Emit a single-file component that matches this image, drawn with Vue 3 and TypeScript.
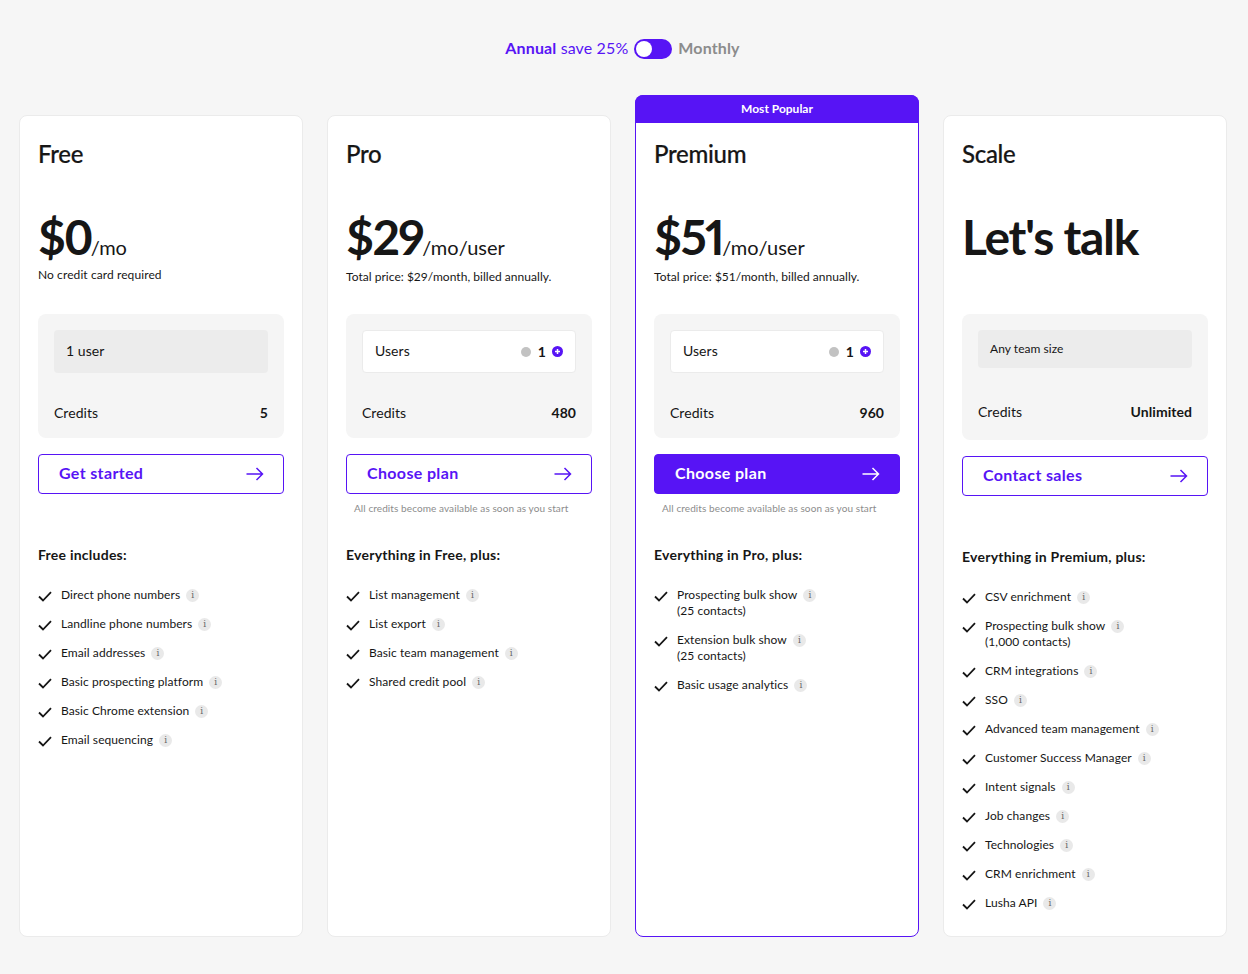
<template>
  <div class="page">
    <div class="billing-toggle">
      <span class="annual"><b>Annual</b> save 25%</span>
      <span class="switch"><span class="knob"></span></span>
      <b class="monthly">Monthly</b>
    </div>

    <div class="plans">
      <section
        v-for="plan in plans"
        :key="plan.name"
        class="plan"
        :class="{ popular: plan.popular, scale: plan.custom, free: plan.price === '$0' }"
      >
        <div v-if="plan.popular" class="banner">Most Popular</div>

        <div class="plan-head">
          <h2 class="plan-name">{{ plan.name }}</h2>
          <div class="price">
            {{ plan.price }}<span v-if="plan.unit" class="unit">{{ plan.unit }}</span>
          </div>
          <p v-if="plan.sub" class="sub">{{ plan.sub }}</p>
        </div>

        <div class="usage">
          <div v-if="plan.seats" class="seats">
            <span>Users</span>
            <span class="stepper">
              <i class="minus"></i>
              <b>1</b>
              <svg class="plus" width="11" height="11" viewBox="0 0 11 11">
                <circle cx="5.5" cy="5.5" r="5.5" fill="#5714f5" />
                <path d="M5.5 3v5M3 5.5h5" stroke="#fff" stroke-width="1.5" />
              </svg>
            </span>
          </div>
          <div v-else class="fixed-seats">{{ plan.teamLabel }}</div>
          <div class="credits">
            <span>Credits</span>
            <b>{{ plan.credits }}</b>
          </div>
        </div>

        <button class="cta" :class="{ solid: plan.popular }">
          <span class="cta-label">{{ plan.cta }}</span>
          <svg width="18" height="14" viewBox="0 0 18 14" fill="none" stroke="currentColor" stroke-width="1.5">
            <path d="M0.5 7H16.5M10.5 1L16.5 7L10.5 13" />
          </svg>
        </button>
        <p class="note">{{ plan.seats ? 'All credits become available as soon as you start' : '' }}</p>

        <h3 class="includes">{{ plan.includes }}</h3>
        <ul class="features">
          <li v-for="item in plan.features" :key="item.label">
            <svg class="check" width="14" height="11" viewBox="0 0 14 11" fill="none" stroke="#161616" stroke-width="1.8">
              <path d="M1 5.5L5 9.5L13 1.2" />
            </svg>
            <span class="feature-text">
              {{ item.label }}<span class="info">i</span>
              <template v-if="item.extra"><br />{{ item.extra }}</template>
            </span>
          </li>
        </ul>
      </section>
    </div>
  </div>
</template>

<script setup lang="ts">
interface Feature {
  label: string;
  extra?: string;
}

interface Plan {
  name: string;
  price: string;
  unit?: string;
  sub?: string;
  seats: boolean;
  teamLabel?: string;
  credits: string;
  cta: string;
  includes: string;
  popular?: boolean;
  custom?: boolean;
  features: Feature[];
}

const toFeatures = (labels: string[]): Feature[] => labels.map((label) => ({ label }));

const plans: Plan[] = [
  {
    name: 'Free',
    price: '$0',
    unit: '/mo',
    sub: 'No credit card required',
    seats: false,
    teamLabel: '1 user',
    credits: '5',
    cta: 'Get started',
    includes: 'Free includes:',
    features: toFeatures([
      'Direct phone numbers',
      'Landline phone numbers',
      'Email addresses',
      'Basic prospecting platform',
      'Basic Chrome extension',
      'Email sequencing',
    ]),
  },
  {
    name: 'Pro',
    price: '$29',
    unit: '/mo/user',
    sub: 'Total price: $29/month, billed annually.',
    seats: true,
    credits: '480',
    cta: 'Choose plan',
    includes: 'Everything in Free, plus:',
    features: toFeatures(['List management', 'List export', 'Basic team management', 'Shared credit pool']),
  },
  {
    name: 'Premium',
    price: '$51',
    unit: '/mo/user',
    sub: 'Total price: $51/month, billed annually.',
    seats: true,
    credits: '960',
    cta: 'Choose plan',
    includes: 'Everything in Pro, plus:',
    popular: true,
    features: [
      { label: 'Prospecting bulk show', extra: '(25 contacts)' },
      { label: 'Extension bulk show', extra: '(25 contacts)' },
      { label: 'Basic usage analytics' },
    ],
  },
  {
    name: 'Scale',
    price: "Let's talk",
    seats: false,
    teamLabel: 'Any team size',
    credits: 'Unlimited',
    cta: 'Contact sales',
    includes: 'Everything in Premium, plus:',
    custom: true,
    features: [
      { label: 'CSV enrichment' },
      { label: 'Prospecting bulk show', extra: '(1,000 contacts)' },
      ...toFeatures([
        'CRM integrations',
        'SSO',
        'Advanced team management',
        'Customer Success Manager',
        'Intent signals',
        'Job changes',
        'Technologies',
        'CRM enrichment',
        'Lusha API',
      ]),
    ],
  },
];
</script>

<style>
body {
  background: #f6f6f6;
}
</style>

<style scoped>
.page {
  box-sizing: border-box;
  height: 974px;
  padding: 39px 21px 37px 19px;
  background: #f6f6f6;
  color: #161616;
  font-family: Lato, "Liberation Sans", sans-serif;
  overflow: hidden;
}

.billing-toggle {
  display: flex;
  justify-content: center;
  align-items: center;
  gap: 6px;
  height: 20px;
  margin-right: 1px;
  font-size: 16px;
  letter-spacing: 0.13px;
}

.annual,
.monthly {
  padding-bottom: 3px;
}

.annual {
  color: #5714f5;
}

.monthly {
  color: #8c8c8c;
}

.switch {
  box-sizing: border-box;
  display: flex;
  width: 38px;
  height: 20px;
  padding: 2px;
  border-radius: 10px;
  background: #5714f5;
}

.knob {
  width: 16px;
  height: 16px;
  border-radius: 50%;
  background: #fff;
}

.plans {
  display: grid;
  grid-template-columns: repeat(4, 284px);
  gap: 24px;
  height: 822px;
  margin-top: 56px;
}

.plan {
  position: relative;
  box-sizing: border-box;
  padding: 22px 18px 0;
  border: 1px solid #ebebeb;
  border-radius: 8px;
  background: #fff;
}

.plan.popular {
  margin-top: -20px;
  padding-top: 42px;
  border-color: #5714f5;
}

.banner {
  position: absolute;
  top: -1px;
  left: -1px;
  right: -1px;
  height: 28px;
  border-radius: 8px 8px 0 0;
  background: #5714f5;
  color: #fff;
  font-size: 12px;
  font-weight: 700;
  line-height: 28px;
  text-align: center;
}

.plan-head {
  height: 176px;
}

.plan-name {
  margin: 0;
  font-size: 24px;
  font-weight: 500;
  line-height: 32px;
  letter-spacing: -0.3px;
  -webkit-text-stroke: 0.2px #161616;
}

.price {
  margin-top: 39px;
  font-size: 48px;
  font-weight: 700;
  line-height: 56px;
  letter-spacing: -1.6px;
  font-feature-settings: "pnum";
}

.free .price {
  letter-spacing: -1px;
  font-feature-settings: normal;
}

.scale .price {
  letter-spacing: -1.3px;
}

.unit {
  margin-left: -1px;
  font-size: 20px;
  font-weight: 400;
  line-height: 1;
  letter-spacing: 0;
}

.sub {
  margin: 4px 0 0;
  font-size: 12px;
  line-height: 16px;
  letter-spacing: 0.03px;
}

.free .sub {
  margin-top: 2px;
  letter-spacing: 0.09px;
}

.usage {
  padding: 16px 16px 15px;
  border-radius: 8px;
  background: #f5f5f5;
  font-size: 14px;
  letter-spacing: 0.05px;
}

.seats,
.fixed-seats {
  box-sizing: border-box;
  display: flex;
  justify-content: space-between;
  align-items: center;
  height: 43px;
  padding: 0 12px;
  border-radius: 4px;
}

.seats span:first-child {
  padding-bottom: 2px;
}

.fixed-seats {
  padding-bottom: 2px;
  background: #ececec;
}

.seats {
  border: 1px solid #ebebeb;
  background: #fff;
}

.stepper {
  display: flex;
  align-items: center;
  gap: 6px;
}

.minus {
  width: 10px;
  height: 10px;
  margin-right: 1px;
  border-radius: 50%;
  background: #c2c2c2;
}

.credits {
  display: flex;
  justify-content: space-between;
  line-height: 20px;
  margin-top: 30px;
}

.scale .usage {
  padding-bottom: 18px;
}

.scale .fixed-seats {
  height: 38px;
  padding-bottom: 1px;
  font-size: 12px;
}

.scale .credits {
  margin-top: 34px;
}

.cta {
  box-sizing: border-box;
  display: flex;
  justify-content: space-between;
  align-items: center;
  width: 100%;
  height: 40px;
  margin-top: 16px;
  padding: 0 19px 0 20px;
  border: 1px solid #5714f5;
  border-radius: 4px;
  background: #fff;
  color: #5714f5;
  font-family: inherit;
  font-size: 16px;
  font-weight: 700;
  letter-spacing: 0.35px;
}

.cta-label {
  padding-bottom: 3px;
}

.cta.solid {
  background: #5714f5;
  color: #fff;
}

.note {
  height: 14px;
  margin: 7px 0 0;
  padding-left: 8px;
  color: #8c8c8c;
  font-size: 10px;
  line-height: 14px;
  letter-spacing: 0.09px;
}

.includes {
  margin: 30px 0 0;
  font-size: 14px;
  font-weight: 700;
  line-height: 20px;
  letter-spacing: 0.24px;
}

.features {
  display: flex;
  flex-direction: column;
  gap: 13px;
  margin: 22px 0 0;
  padding: 0;
  list-style: none;
  font-size: 12px;
  line-height: 16px;
  letter-spacing: 0.08px;
}

.features li {
  display: flex;
  gap: 9px;
}

.check {
  flex-shrink: 0;
  margin-top: 4px;
}

.info {
  display: inline-block;
  width: 13px;
  height: 13px;
  margin-left: 6px;
  border-radius: 50%;
  background: #e9e9e9;
  color: #666;
  font-family: "DejaVu Serif", serif;
  font-size: 9px;
  line-height: 13px;
  letter-spacing: 0;
  text-align: center;
  vertical-align: 1px;
}
</style>
